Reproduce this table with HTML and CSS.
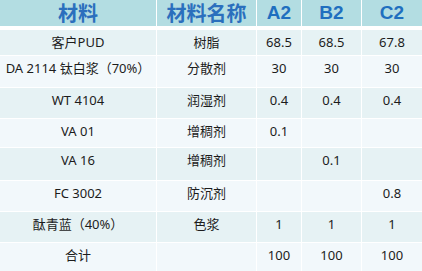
FILE: index.html
```html
<!DOCTYPE html>
<html lang="zh">
<head>
<meta charset="utf-8">
<link rel="stylesheet" href="styles.css">
</head>
<body>
<div class="table">
  <div class="cell head cjk">材料</div>
  <div class="cell head cjk">材料名称</div>
  <div class="cell head">A2</div>
  <div class="cell head">B2</div>
  <div class="cell head">C2</div>

  <div class="cell a">客户PUD</div><div class="cell a">树脂</div><div class="cell a">68.5</div><div class="cell a">68.5</div><div class="cell a">67.8</div>
  <div class="cell b">DA 2114 钛白浆（70%）</div><div class="cell b">分散剂</div><div class="cell b">30</div><div class="cell b">30</div><div class="cell b">30</div>
  <div class="cell a">WT 4104</div><div class="cell a">润湿剂</div><div class="cell a">0.4</div><div class="cell a">0.4</div><div class="cell a">0.4</div>
  <div class="cell b">VA 01</div><div class="cell b">增稠剂</div><div class="cell b">0.1</div><div class="cell b"></div><div class="cell b"></div>
  <div class="cell a">VA 16</div><div class="cell a">增稠剂</div><div class="cell a"></div><div class="cell a">0.1</div><div class="cell a"></div>
  <div class="cell b">FC 3002</div><div class="cell b">防沉剂</div><div class="cell b"></div><div class="cell b"></div><div class="cell b">0.8</div>
  <div class="cell a">酞青蓝（40%）</div><div class="cell a">色浆</div><div class="cell a">1</div><div class="cell a">1</div><div class="cell a">1</div>
  <div class="cell b">合计</div><div class="cell b"></div><div class="cell b">100</div><div class="cell b">100</div><div class="cell b">100</div>
</div>
</body>
</html>
```
FILE: styles.css
```css
html, body {
  margin: 0;
  padding: 0;
  background: #ffffff;
}
body {
  width: 422px;
  height: 271px;
  overflow: hidden;
}
.table {
  display: grid;
  grid-template-columns: 156px 99px 44px 59px 60px;
  grid-template-rows: 29px 25px 31px 30px 28px 32px 30px 30px 30px;
  column-gap: 1px;
  row-gap: 1px;
  background: #ffffff;
  font-family: "Noto Sans", "Noto Sans CJK SC", sans-serif;
  font-size: 13px;
  color: #1c1c1c;
}
.cell {
  text-align: center;
  line-height: 22px;
  padding-top: 1px;
  white-space: nowrap;
  overflow: hidden;
}
.head {
  background: #b3dde2;
  color: #1f6fbf;
  font-family: "Liberation Sans", Arial, sans-serif;
  font-weight: 700;
  font-size: 19px;
  line-height: 26px;
  padding-top: 0;
  margin-bottom: 3px;
  overflow: visible;
}
.head.cjk {
  font-family: "Noto Sans CJK SC", sans-serif;
  font-size: 20px;
  color: #2b6fbd;
  line-height: 25px;
}
.a {
  background: #e6f2f4;
}
.b {
  background: #f2f8fb;
}
```
